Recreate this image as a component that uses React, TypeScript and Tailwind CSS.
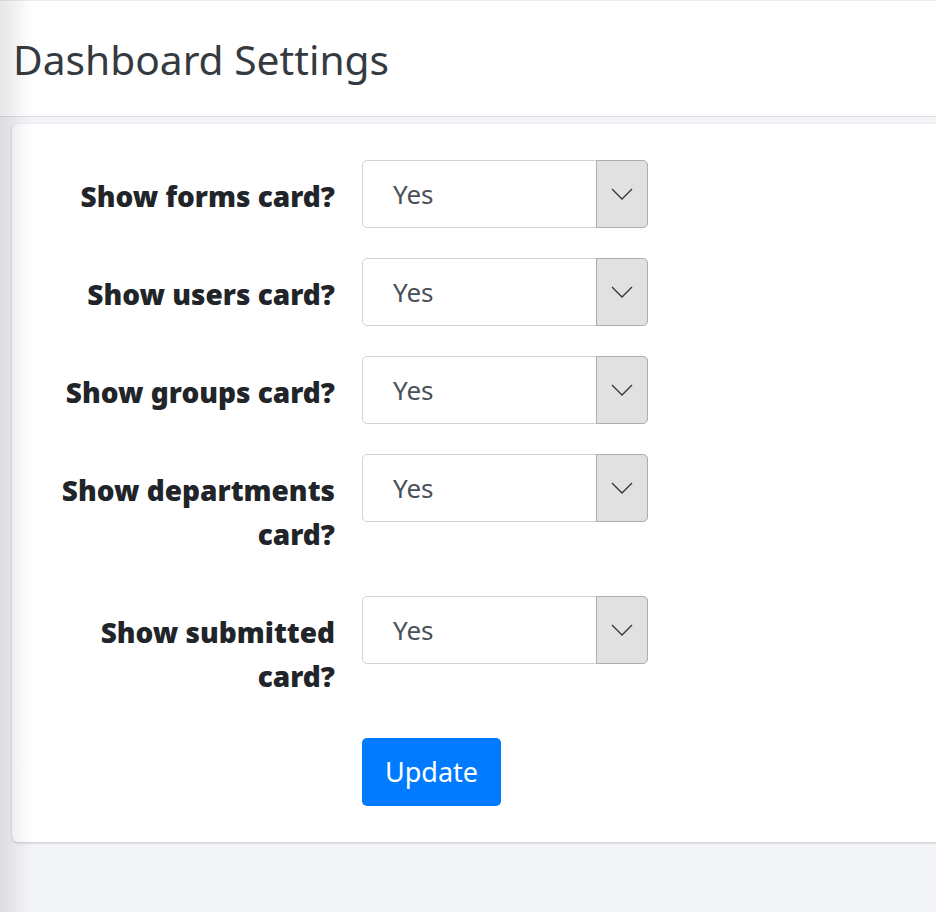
const rows = [
  'Show forms card?',
  'Show users card?',
  'Show groups card?',
  'Show departments card?',
  'Show submitted card?',
];

function SelectBox() {
  return (
    <div className="flex h-[68px] w-[286px] shrink-0 rounded-[5px] border border-[#ced4da] bg-white">
      <div className="flex flex-1 items-center pl-[30px] text-[26px] text-[#495057]">Yes</div>
      <div className="-my-px -mr-px flex w-[52px] items-center justify-center rounded-r-[5px] border border-[#adadad] bg-[#e1e1e1]">
        <svg width="22" height="12" viewBox="0 0 22 12" fill="none">
          <polyline points="1,1 11,11 21,1" stroke="#333" strokeWidth="1.3" />
        </svg>
      </div>
    </div>
  );
}

export default function App() {
  return (
    <div className="relative min-h-[912px] overflow-hidden bg-[#f4f5f9] font-['Noto_Sans',sans-serif]">
      <div className="pointer-events-none absolute inset-y-0 left-0 w-[32px] bg-gradient-to-r from-black/10 to-transparent" />
      <header className="h-[117px] border-t border-b border-t-[#ececef] border-b-[#dcdde2] bg-white pl-[13px] pt-[28px]">
        <h2 className="text-[40.7px] leading-[60px] text-[#343a40]">Dashboard Settings</h2>
      </header>
      <div className="pl-[12px] pt-[7px]">
        <div className="w-[940px] rounded-[6px] bg-white pb-[36px] pt-[36px] shadow-[0_1px_3px_rgba(0,0,0,0.2)]">
          <div className="flex flex-col gap-[30px]">
            {rows.map((r) => (
              <div key={r} className="flex gap-[27px]">
                <label className="w-[323px] shrink-0 pl-[40px] pt-[14px] pb-[10px] text-right text-[28px] font-black leading-[44px] text-[#212529]">
                  {r}
                </label>
                <SelectBox />
              </div>
            ))}
            <div className="pl-[350px]">
              <button className="h-[68px] rounded-[5px] bg-[#007bff] px-[23px] text-[27px] text-white">Update</button>
            </div>
          </div>
        </div>
      </div>
    </div>
  );
}
